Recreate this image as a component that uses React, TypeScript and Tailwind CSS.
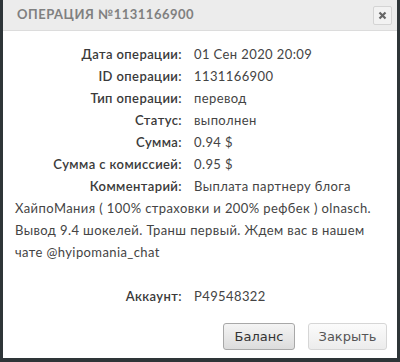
import React from "react";

const rows: [string, string][] = [
  ["Дата операции:", "01 Сен 2020 20:09"],
  ["ID операции:", "1131166900"],
  ["Тип операции:", "перевод"],
  ["Статус:", "выполнен"],
  ["Сумма:", "0.94 $"],
  ["Сумма с комиссией:", "0.95 $"],
];

function Label({ children }: { children: React.ReactNode }) {
  return (
    <span className="inline-block w-[167px] text-right font-semibold text-[#3a3a3a] mr-[12px]">
      {children}
    </span>
  );
}

export default function App() {
  return (
    <div className="w-[400px] h-[362px] bg-[#2e3538] flex flex-col">
      <div className="mx-[3px] flex-1 flex flex-col bg-white mb-[4px]">
        <div className="h-[31px] bg-[#ececec] border-b border-[#dcdcdc] flex items-center justify-between pl-[14px] pr-[5px]">
          <span
            className="text-[13px] font-bold text-[#808080] tracking-[0.5px] uppercase"
            style={{ fontFamily: "Lato, 'Noto Sans', sans-serif" }}
          >
            Операция №1131166900
          </span>
          <div className="w-[19px] h-[19px] border border-[#d4d4d4] rounded-[2px] bg-[#f2f2f2] flex items-center justify-center">
            <svg width="9" height="9" viewBox="0 0 9 9">
              <path d="M1.5 1.5 L7.5 7.5 M7.5 1.5 L1.5 7.5" stroke="#666" strokeWidth="2.2" />
            </svg>
          </div>
        </div>
        <div
          className="pl-[12px] pr-[10px] pt-[12px] text-[13px] leading-[22px] text-[#444] tracking-[0.4px]"
          style={{ fontFamily: "Lato, 'Noto Sans', sans-serif" }}
        >
          {rows.map(([l, v]) => (
            <div key={l}>
              <Label>{l}</Label>
              <span>{v}</span>
            </div>
          ))}
          <p>
            <Label>Комментарий:</Label>
            Выплата партнеру блога ХайпоМания ( 100% страховки и 200% рефбек ) olnasch. Вывод 9.4 шокелей. Транш первый. Ждем вас в нашем чате @hyipomania_chat
          </p>
          <div className="h-[22px]" />
          <div>
            <Label>Аккаунт:</Label>
            <span>P49548322</span>
          </div>
        </div>
        <div className="flex-1" />
        <div
          className="flex justify-end gap-[13px] pr-[10px] pb-[8px] text-[13px]"
          style={{ fontFamily: "'DejaVu Sans', sans-serif" }}
        >
          <button className="w-[72px] h-[27px] rounded-[3px] border border-[#a8a8a8] bg-gradient-to-b from-[#f4f4f4] to-[#dcdcdc] text-[#333]">
            Баланс
          </button>
          <button className="w-[79px] h-[27px] rounded-[3px] border border-[#d6d6d6] bg-gradient-to-b from-[#fbfbfb] to-[#ececec] text-[#555]">
            Закрыть
          </button>
        </div>
      </div>
    </div>
  );
}
